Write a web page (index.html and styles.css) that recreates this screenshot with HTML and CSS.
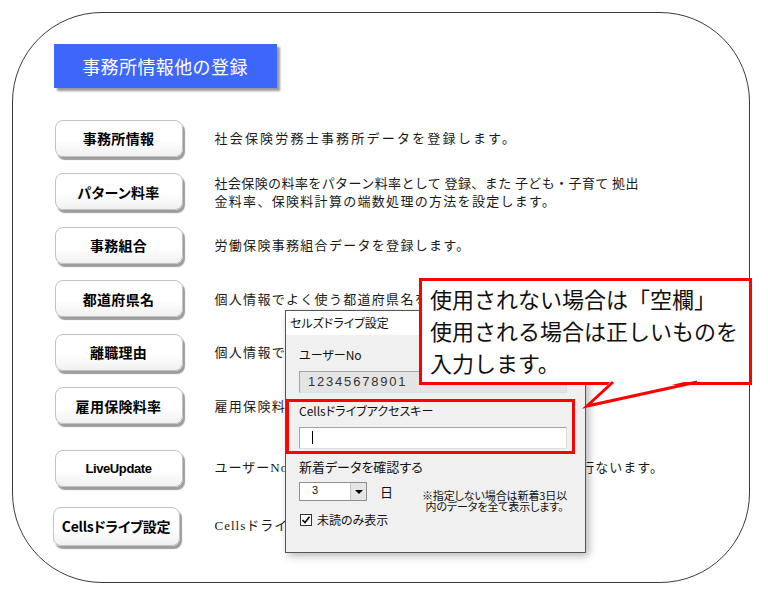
FILE: index.html
```html
<!DOCTYPE html>
<html lang="ja">
<head>
<meta charset="utf-8">
<title>事務所情報他の登録</title>
<link rel="stylesheet" href="styles.css">
</head>
<body>
<div class="page">
  <div class="frame">
    <div class="title">事務所情報他の登録</div>
    <div class="menu">
      <div class="row"><div class="btn">事務所情報</div><p class="desc desc-wide">社会保険労務士事務所データを登録します。</p></div>
      <div class="row"><div class="btn">パターン料率</div><p class="desc"><span class="tight">社会保険の料率をパターン料率として 登録、また 子ども・子育て 拠出</span><br>金料率、保険料計算の端数処理の方法を設定します。</p></div>
      <div class="row"><div class="btn">事務組合</div><p class="desc">労働保険事務組合データを登録します。</p></div>
      <div class="row"><div class="btn">都道府県名</div><p class="desc">個人情報でよく使う都道府県名を登録します。</p></div>
      <div class="row"><div class="btn">離職理由</div><p class="desc">個人情報でよく使う離職理由を登録します。</p></div>
      <div class="row"><div class="btn">雇用保険料率</div><p class="desc">雇用保険料率を登録します。</p></div>
      <div class="row row-live"><div class="btn btn-latin">LiveUpdate</div><p class="desc desc-serif">ユーザーNoを確認してプログラムの最新版アップデートを行ないます。</p></div>
      <div class="row row-cells"><div class="btn btn-wide">Cellsドライブ設定</div><p class="desc desc-serif">Cellsドライブの設定を行ないます。</p></div>
    </div>
  </div>

  <div class="dialog">
    <div class="dlg-title">セルズドライブ設定</div>
    <div class="dlg-body">
      <div class="lbl lbl-user">ユーザーNo</div>
      <div class="tb tb-ro">12345678901</div>
      <div class="highlight">
        <div class="lbl">Cellsドライブアクセスキー</div>
        <div class="tb tb-edit"><span class="caret"></span></div>
      </div>
      <div class="lbl lbl-new">新着データを確認する</div>
      <div class="opt-row">
        <div class="combo"><span class="combo-val">3</span><span class="combo-btn"><span class="tri"></span></span></div>
        <span class="unit">日</span>
        <p class="note">※指定しない場合は新着3日以<br>内のデータを全て表示します。</p>
      </div>
      <div class="chk-row"><span class="chk"><svg width="10" height="10" viewBox="0 0 10 10"><path d="M1.5 5 L4 7.5 L8.5 1.8" fill="none" stroke="#000" stroke-width="1.6"/></svg></span>未読のみ表示</div>
    </div>
  </div>

  <div class="callout">使用されない場合は「空欄」<br>使用される場合は正しいものを<br>入力します。</div>
  <svg class="tail" width="125" height="36" viewBox="0 0 125 36"><polygon points="33,3 7,30 116,3" fill="#fff"/><polyline points="33,6 7,30 117,6" fill="none" stroke="#f00" stroke-width="3"/></svg>
</div>
</body>
</html>
```

FILE: styles.css
```css
* { box-sizing: border-box; }
html, body { margin: 0; padding: 0; background: #fff; }
body { font-family: "Noto Sans CJK JP", "Liberation Sans", sans-serif; color: #111; }

.page {
  position: relative;
  width: 768px;
  height: 593px;
  padding: 12px 18px 10px 12px;
  overflow: hidden;
}

.frame {
  width: 738px;
  height: 571px;
  border: 1.5px solid #3a3a3a;
  border-radius: 90px;
  padding: 30.5px 0 0 40.5px;
}

.title {
  width: 223px;
  height: 44px;
  background: #3d66fb;
  color: #fff;
  font-size: 18px;
  line-height: 44px;
  text-align: center;
  letter-spacing: 0.4px;
  box-shadow: 3px 3px 2px #9a9a9a;
}

.menu {
  display: flex;
  flex-direction: column;
  gap: 16.5px;
  margin-top: 32px;
}

.row {
  display: grid;
  grid-template-columns: 161px 1fr;
  align-items: center;
}
.row-live { margin-top: 9px; }
.row-cells { margin-top: 3.5px; }

.btn {
  width: 128px;
  height: 37px;
  margin-left: 1px;
  display: flex;
  align-items: center;
  justify-content: center;
  background: linear-gradient(#fff 55%, #f1f1f1);
  border: 1px solid #c2c2c2;
  border-radius: 8px;
  box-shadow: 2px 3px 1px #9d9d9d;
  font-weight: 700;
  font-size: 14px;
  color: #000;
  font-feature-settings: "palt";
  letter-spacing: 0.3px;
}
.btn-latin {
  font-family: "Liberation Sans", sans-serif;
  font-size: 13px;
  letter-spacing: -0.4px;
}
.btn-wide {
  width: 127px;
  height: 39px;
  margin-left: -1px;
  letter-spacing: -0.3px;
}

.desc {
  margin: 0;
  font-size: 13px;
  line-height: 18px;
  letter-spacing: 1.3px;
  color: #1a1a1a;
  white-space: nowrap;
}
.desc-wide { letter-spacing: 2.2px; }
.tight { letter-spacing: 0.4px; }
.desc-serif { font-family: "Liberation Serif", "Noto Sans CJK JP", serif; letter-spacing: 1px; }

/* dialog */
.dialog {
  position: absolute;
  left: 285px;
  top: 310px;
  width: 301px;
  height: 243px;
  border: 1px solid #555;
  background: #f0f0f0;
  box-shadow: 3px 3px 8px rgba(0, 0, 0, 0.28);
  font-size: 12px;
  font-feature-settings: "palt";
  color: #111;
}
.dlg-title {
  height: 24px;
  background: #fff;
  line-height: 24px;
  padding-left: 4px;
  font-size: 12px;
}
.dlg-body { padding-left: 13px; }
.lbl { height: 14px; line-height: 14px; font-size: 12px; white-space: nowrap; }
.lbl-user { margin-top: 13px; }
.tb {
  width: 268px;
  height: 22px;
  border: 1px solid;
  border-color: #a3a3a3 #dedede #dedede #a3a3a3;
}
.tb-ro {
  margin-top: 9px;
  background: #e4e4e4;
  font-family: "Liberation Sans", sans-serif;
  font-size: 13px;
  letter-spacing: 1.8px;
  line-height: 20px;
  padding-left: 8px;
  color: #333;
}
.highlight {
  margin: 6px 0 0 -13px;
  width: 289px;
  border: 3px solid #f00;
  padding: 2px 0 2px 10px;
}
.tb-edit { margin-top: 9px; background: #fff; }
.caret {
  display: block;
  width: 1px;
  height: 13px;
  background: #000;
  margin: 3px 0 0 12px;
}
.lbl-new { margin-top: 6px; font-size: 13px; }
.opt-row { display: flex; align-items: flex-start; margin-top: 8px; }
.combo {
  width: 68px;
  height: 19px;
  border: 1px solid #8f8f8f;
  background: #fff;
  display: flex;
}
.combo-val {
  flex: 1;
  padding-left: 12px;
  font-family: "Liberation Sans", sans-serif;
  font-size: 11px;
  line-height: 15px;
}
.combo-btn {
  width: 16px;
  background: #e5e5e5;
  border-left: 1px solid #c8c8c8;
  display: flex;
  align-items: center;
  justify-content: center;
}
.tri {
  width: 0;
  height: 0;
  border-left: 4px solid transparent;
  border-right: 4px solid transparent;
  border-top: 4px solid #000;
}
.unit { margin-left: 13px; font-size: 13px; line-height: 19px; }
.note {
  margin: 8px 0 0 24px;
  width: 155px;
  font-size: 11px;
  line-height: 11px;
  text-align: center;
  letter-spacing: -0.1px;
  white-space: nowrap;
}
.chk-row {
  display: flex;
  align-items: center;
  margin: 1px 0 0 1px;
  height: 13px;
  font-size: 12px;
}
.chk {
  width: 12px;
  height: 12px;
  border: 1px solid #333;
  background: #fff;
  margin-right: 5px;
  display: flex;
}

/* callout */
.callout {
  position: absolute;
  left: 419px;
  top: 278px;
  width: 333px;
  height: 107px;
  border: 3px solid #f00;
  background: #fff;
  padding: 1px 0 0 8px;
  font-size: 22px;
  line-height: 32px;
  color: #111;
  white-space: nowrap;
}
.tail { position: absolute; left: 580px; top: 376px; }
```
